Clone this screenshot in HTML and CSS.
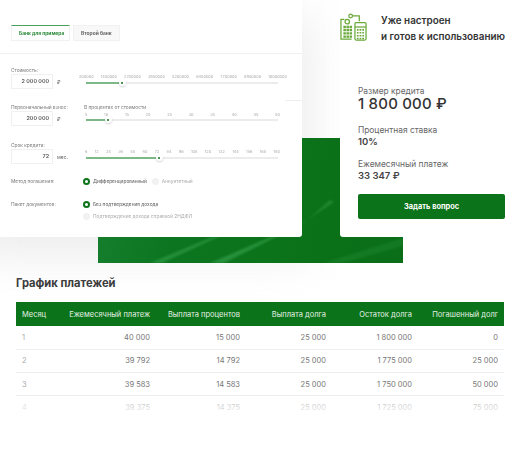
FILE: index.html
```html
<!DOCTYPE html>
<html lang="ru">
<head>
<meta charset="utf-8">
<title>График платежей</title>
<link rel="stylesheet" href="styles.css">
</head>
<body>
<div class="page">
  <section class="hero">
    <div class="shade"></div>
    <div class="band">
      <svg class="streaks" viewBox="0 0 305 125" preserveAspectRatio="none">
        <polygon class="s1" points="52,125 64,125 135,92 112,100"/>
        <polygon class="s2" points="112,125 126,125 200,88 170,100"/>
        <polygon class="s3" points="198,92 206,84 236,64 232,62"/>
        <polygon class="s4" points="225,125 245,125 305,108 305,100"/>
      </svg>
    </div>
    <div class="card">
      <div class="tabs">
        <div class="tab active">Банк для примера</div>
        <div class="tab">Второй банк</div>
      </div>
      <div class="form">
        <div class="row first">
          <div class="field">
            <div class="lbl">Стоимость:</div>
            <div class="inp-line"><div class="inp">2 000 000</div><span class="unit">₽</span></div>
          </div>
          <div class="slider">
            <div class="ticks wide"><span>200000</span><span>1450000</span><span>2700000</span><span>3950000</span><span>5200000</span><span>6450000</span><span>7700000</span><span>8950000</span><span>10000000</span></div>
            <div class="track"><div class="fill f1"><i class="thumb"></i></div></div>
          </div>
        </div>
        <div class="row second">
          <div class="field">
            <div class="lbl">Первоначальный взнос:</div>
            <div class="inp-line"><div class="inp">200 000</div><span class="unit">₽</span></div>
          </div>
          <div class="slider">
            <div class="cap">В процентах от стоимости</div>
            <div class="ticks"><span>5</span><span>10</span><span>15</span><span>20</span><span>25</span><span>30</span><span>35</span><span>40</span><span>45</span><span>50</span></div>
            <div class="track"><div class="fill f2"><i class="thumb"></i></div></div>
          </div>
        </div>
        <div class="row third">
          <div class="field">
            <div class="lbl">Срок кредита:</div>
            <div class="inp-line"><div class="inp">72</div><span class="unit">мес.</span></div>
          </div>
          <div class="slider">
            <div class="ticks"><span>6</span><span>12</span><span>24</span><span>36</span><span>48</span><span>60</span><span>72</span><span>84</span><span>96</span><span>108</span><span>120</span><span>132</span><span>144</span><span>156</span><span>168</span><span>180</span></div>
            <div class="track"><div class="fill f3"><i class="thumb"></i></div></div>
          </div>
        </div>
        <div class="opt-row">
          <div class="opt-lbl">Метод погашения:</div>
          <div class="opts">
            <span class="opt on"><i class="radio"></i>Дифференцированный</span>
            <span class="opt"><i class="radio"></i>Аннуитетный</span>
          </div>
        </div>
        <div class="opt-row docs">
          <div class="opt-lbl">Пакет документов:</div>
          <div class="opts stack">
            <span class="opt on"><i class="radio"></i>Без подтверждения дохода</span>
            <span class="opt"><i class="radio"></i>Подтверждение дохода справкой 2НДФЛ</span>
          </div>
        </div>
      </div>
    </div>
    <aside class="side">
      <div class="promo">
        <svg class="promo-icon" viewBox="0 0 28 28" fill="none" stroke="#6aa93a" stroke-width="1.3">
          <path d="M12.5 2.5H20V8M4.5 6H1V26.5H12"/>
          <circle cx="11" cy="2.6" r="1.9"/>
          <circle cx="7.5" cy="8.5" r="2.3"/>
          <rect x="15.5" y="9.5" width="11.5" height="18" rx="1.2"/>
          <path d="M15.5 14H27"/>
          <path d="M17.5 17H25.5M17.5 20H25.5M17.5 23H25.5M17.5 26H25.5" stroke-width="1.6" stroke-dasharray="1.8 1"/>
          <path d="M3.5 14H13M3.5 17.3H13M3.5 20.6H13M3.5 23.9H13" stroke-width="2.4" stroke-dasharray="2.6 .6"/>
        </svg>
        <div class="promo-text">Уже настроен<br>и готов к использованию</div>
      </div>
      <div class="facts">
        <div class="fact-lbl">Размер кредита</div>
        <div class="fact-big">1 800 000 ₽</div>
        <div class="fact-lbl gap">Процентная ставка</div>
        <div class="fact-val">10%</div>
        <div class="fact-lbl gap2">Ежемесячный платеж</div>
        <div class="fact-val">33 347 ₽</div>
        <div class="btn">Задать вопрос</div>
      </div>
    </aside>
  </section>
  <section class="schedule">
    <h2>График платежей</h2>
    <div class="table-wrap">
      <table>
        <thead>
          <tr><th>Месяц</th><th>Ежемесячный платеж</th><th>Выплата процентов</th><th>Выплата долга</th><th>Остаток долга</th><th>Погашенный долг</th></tr>
        </thead>
        <tbody>
          <tr><td>1</td><td>40 000</td><td>15 000</td><td>25 000</td><td>1 800 000</td><td>0</td></tr>
          <tr><td>2</td><td>39 792</td><td>14 792</td><td>25 000</td><td>1 775 000</td><td>25 000</td></tr>
          <tr><td>3</td><td>39 583</td><td>14 583</td><td>25 000</td><td>1 750 000</td><td>50 000</td></tr>
          <tr><td>4</td><td>39 375</td><td>14 375</td><td>25 000</td><td>1 725 000</td><td>75 000</td></tr>
        </tbody>
      </table>
      <div class="fade"></div>
    </div>
  </section>
</div>
</body>
</html>
```
FILE: styles.css
```css
* { box-sizing: border-box; }
html, body { margin: 0; padding: 0; background: #fff; }
body { font-family: "Inter", "Liberation Sans", sans-serif; color: #333; }
.page { width: 520px; height: 449px; overflow: hidden; }

.hero { position: relative; height: 263px; display: flex; align-items: flex-start; }
.shade { position: absolute; left: -30px; top: 17px; width: 340px; height: 238px; background: #ececec; filter: blur(22px); }
.band { position: absolute; left: 98px; top: 138px; width: 305px; height: 125px; overflow: hidden; background: linear-gradient(100deg, #178030 0, #0c7520 28%, #0b7319 60%, #0a6e18 100%); }
.streaks { display: block; width: 100%; height: 100%; filter: blur(1px); }
.s1 { fill: #2f9a45; opacity: .7; }
.s2 { fill: #2f9a45; opacity: .75; }
.s3 { fill: #2f9a45; opacity: .55; }
.s4 { fill: #2f9a45; opacity: .25; }

.card { position: relative; width: 302px; height: 237px; background: #fff; border-bottom-right-radius: 3px; flex: none; }
.card::after { content: ""; position: absolute; right: 0; top: 100px; width: 17px; height: 1px; background: #eee; }
.tabs { display: flex; gap: 3px; height: 54px; padding: 25px 0 0 11px; border-bottom: 1px solid #f1f1f1; filter: blur(.25px); }
.tab { height: 16px; padding: 0 7px; font-size: 4.9px; line-height: 15px; font-weight: 700; color: #666; background: #f8f8f8; border: 1px solid #f1f1f1; white-space: nowrap; }
.tab.active { width: 59px; color: #2c8a3a; background: #fff; border-top: 1px solid #4aa05a; }
.form { padding: 0 24px 0 11px; filter: blur(.25px); }
.row { display: flex; height: 22px; }
.row.first { margin-top: 13px; }
.row.second { margin-top: 15px; }
.row.third { margin-top: 16px; }
.field { width: 75px; flex: none; }
.lbl { font-size: 4.8px; line-height: 6px; color: #777; margin-bottom: 1px; white-space: nowrap; }
.inp-line { display: flex; align-items: center; gap: 4px; }
.inp { width: 42px; height: 15px; border: 1px solid #f0f0f0; font-size: 5.4px; font-weight: 600; line-height: 13px; text-align: right; padding-right: 3px; color: #555; }
.unit { font-size: 5px; color: #666; }
.slider { position: relative; width: 192px; padding-top: 7px; }
.row.second .slider { padding-top: 8px; }
.cap { position: absolute; left: -2px; top: 0; font-size: 4.8px; line-height: 6px; color: #777; white-space: nowrap; }
.ticks { display: flex; justify-content: space-between; font-size: 3.9px; line-height: 6px; color: #aaa; margin: 0 -2px 0 -1px; white-space: nowrap; }
.ticks.wide { margin: 0 -9px 0 -7px; }
.track { height: 1.5px; background: #ececec; margin-top: 2.25px; }
.row.second .track { margin-top: 1.25px; }
.fill { position: relative; height: 100%; background: #7cb888; }
.f1 { width: 36px; }
.f2 { width: 22px; }
.f3 { width: 73px; }
.thumb { position: absolute; right: -3.5px; top: -3px; width: 7px; height: 7px; border-radius: 50%; background: #fff; box-shadow: 0 1px 2px rgba(0,0,0,.18); }
.thumb::after { content: ""; position: absolute; left: 2.5px; top: 2.5px; width: 2px; height: 2px; border-radius: 50%; background: #0b7319; }

.opt-row { display: flex; align-items: flex-start; margin-top: 13.5px; font-size: 4.8px; color: #777; }
.opt-row.docs { margin-top: 16px; }
.opt-lbl { width: 72px; line-height: 7px; white-space: nowrap; }
.opts { display: flex; gap: 5px; }
.opts.stack { flex-direction: column; gap: 5px; }
.opt { display: flex; align-items: center; gap: 3px; line-height: 7px; color: #aaa; white-space: nowrap; }
.opt.on { color: #555; }
.radio { width: 7px; height: 7px; border-radius: 50%; background: #f2f2f2; border: 1px solid #eee; flex: none; }
.opt.on .radio { background: #fff; border: 2px solid #0b7319; }

.side { position: relative; margin-left: 38px; width: 180px; height: 237px; background: #fff; border-bottom-left-radius: 3px; flex: none; }
.promo { display: flex; align-items: flex-start; gap: 14px; padding-top: 13px; }
.promo-icon { width: 27px; height: 28px; flex: none; }
.promo-text { font-size: 9.9px; line-height: 16px; font-weight: 600; color: #333; margin-top: -1px; white-space: nowrap; }
.facts { padding: 0 15px 0 18px; margin-top: 42px; }
.fact-lbl { font-size: 8.4px; line-height: 10px; color: #666; white-space: nowrap; }
.fact-lbl.gap { margin-top: 14px; }
.fact-lbl.gap2 { margin-top: 11px; }
.fact-big { font-size: 15px; line-height: 15px; font-weight: 500; color: #333; letter-spacing: .2px; white-space: nowrap; }
.fact-val { font-size: 9.5px; line-height: 13px; font-weight: 600; color: #444; }
.btn { height: 25px; margin-top: 12px; border-radius: 2px; background: #0b7319; color: #fff; font-size: 7.4px; line-height: 25px; font-weight: 700; text-align: center; }

.schedule { padding: 13px 16px 0; }
h2 { margin: 0; font-size: 11.2px; line-height: 14px; font-weight: 700; color: #2b2b2b; }
.table-wrap { position: relative; margin-top: 12px; }
table { width: 488px; border-collapse: collapse; table-layout: fixed; font-size: 7.5px; }
th:nth-child(1) { width: 50px; }
th:nth-child(2), th:nth-child(3) { width: 90px; }
th { height: 24px; padding: 0 6px 0 0; background: #0b7319; color: #e4f0e4; font-weight: 400; text-align: right; white-space: nowrap; }
th:first-child { padding-left: 6px; }
th:first-child, td:first-child { text-align: left; }
td { height: 23.3px; padding: 0 6px; color: #777; text-align: right; border-bottom: 1px solid #eee; white-space: nowrap; }
td:first-child { color: #aaa; }
.fade { position: absolute; left: 0; right: 0; top: 94px; height: 24px; background: linear-gradient(to bottom, rgba(255,255,255,.45), #fff 100%); }
```
